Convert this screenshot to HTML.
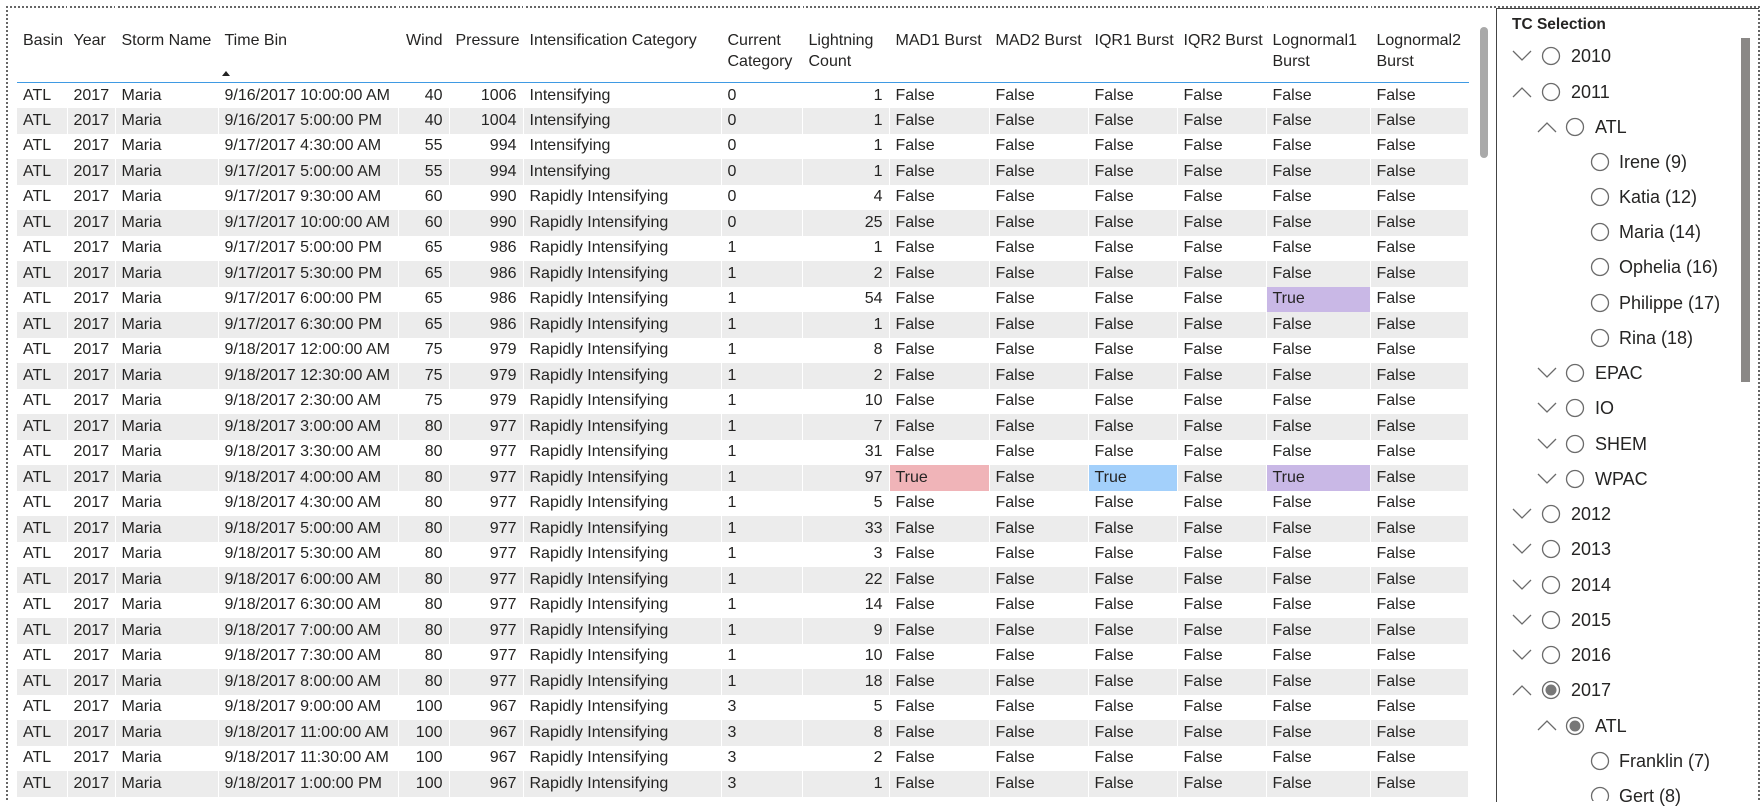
<!DOCTYPE html>
<html><head><meta charset="utf-8"><style>
body{margin:0;width:1762px;height:801px;overflow:hidden;background:#fff;font-family:"Liberation Sans",sans-serif;color:#252423;position:relative}
.dotl{position:absolute;left:6px;top:6px;width:2px;height:795px;background:repeating-linear-gradient(#666 0 2px,transparent 2px 4px)}
.dott{position:absolute;left:6px;top:6px;width:1756px;height:2px;background:repeating-linear-gradient(90deg,#666 0 2px,transparent 2px 4px)}
.dotr{position:absolute;left:1758px;top:6px;width:2px;height:795px;background:repeating-linear-gradient(#666 0 2px,transparent 2px 4px)}
table{position:absolute;left:17px;top:6px;border-collapse:collapse;table-layout:fixed;width:1451px;font-size:16px}
td,th{padding:0 6px;white-space:nowrap;overflow:hidden;border-right:1px solid #fff;text-align:left;font-weight:normal}
th{height:52px;box-sizing:content-box;vertical-align:top;padding-top:24px;padding-bottom:0;line-height:21px;border-bottom:1.5px solid #3f9ae3;position:relative}
tbody tr{height:25.5px}
tbody tr:nth-child(even) td{background:#ececec}
td{line-height:24px}
.r{text-align:right}
tbody tr td.pk{background:#f0b4b8!important}
tbody tr td.bl{background:#a3d0fb!important}
tbody tr td.pu{background:#c9b8e6!important}
.arrow{position:absolute;top:65px;width:0;height:0;border-left:4px solid transparent;border-right:4px solid transparent;border-bottom:5px solid #222}
.sb1{position:absolute;left:1480px;top:27px;width:8px;height:131px;background:#a9a9a9;border-radius:4px}
.slicer{position:absolute;left:1496px;top:8px;width:262px;height:793px;border-left:1.5px solid #444;border-top:1.5px solid #444}
.sb2{position:absolute;left:1741px;top:38px;width:9px;height:344px;background:#8a8886}
.tt{position:absolute;left:1512px;top:16px;font-size:15.5px;font-weight:bold;color:#252423}
.it{position:absolute;font-size:18px;line-height:22px;height:22px;color:#252423}
</style></head><body>
<div class="dott"></div><div class="dotl"></div><div class="dotr"></div>
<table>
<colgroup><col style="width:50px"><col style="width:48px"><col style="width:103px"><col style="width:180px"><col style="width:51px"><col style="width:74px"><col style="width:198px"><col style="width:81px"><col style="width:87px"><col style="width:100px"><col style="width:99px"><col style="width:89px"><col style="width:89px"><col style="width:104px"><col style="width:98px"></colgroup>
<thead><tr><th>Basin</th><th>Year</th><th>Storm Name</th><th>Time Bin<span class="arrow" style="left:3px"></span></th><th class="r">Wind</th><th class="r">Pressure</th><th>Intensification Category</th><th>Current<br>Category</th><th>Lightning<br>Count</th><th>MAD1 Burst</th><th>MAD2 Burst</th><th>IQR1 Burst</th><th>IQR2 Burst</th><th>Lognormal1<br>Burst</th><th>Lognormal2<br>Burst</th></tr></thead>
<tbody>
<tr><td>ATL</td><td>2017</td><td>Maria</td><td>9/16/2017 10:00:00 AM</td><td class="r">40</td><td class="r">1006</td><td>Intensifying</td><td>0</td><td class="r">1</td><td>False</td><td>False</td><td>False</td><td>False</td><td>False</td><td>False</td></tr>
<tr><td>ATL</td><td>2017</td><td>Maria</td><td>9/16/2017 5:00:00 PM</td><td class="r">40</td><td class="r">1004</td><td>Intensifying</td><td>0</td><td class="r">1</td><td>False</td><td>False</td><td>False</td><td>False</td><td>False</td><td>False</td></tr>
<tr><td>ATL</td><td>2017</td><td>Maria</td><td>9/17/2017 4:30:00 AM</td><td class="r">55</td><td class="r">994</td><td>Intensifying</td><td>0</td><td class="r">1</td><td>False</td><td>False</td><td>False</td><td>False</td><td>False</td><td>False</td></tr>
<tr><td>ATL</td><td>2017</td><td>Maria</td><td>9/17/2017 5:00:00 AM</td><td class="r">55</td><td class="r">994</td><td>Intensifying</td><td>0</td><td class="r">1</td><td>False</td><td>False</td><td>False</td><td>False</td><td>False</td><td>False</td></tr>
<tr><td>ATL</td><td>2017</td><td>Maria</td><td>9/17/2017 9:30:00 AM</td><td class="r">60</td><td class="r">990</td><td>Rapidly Intensifying</td><td>0</td><td class="r">4</td><td>False</td><td>False</td><td>False</td><td>False</td><td>False</td><td>False</td></tr>
<tr><td>ATL</td><td>2017</td><td>Maria</td><td>9/17/2017 10:00:00 AM</td><td class="r">60</td><td class="r">990</td><td>Rapidly Intensifying</td><td>0</td><td class="r">25</td><td>False</td><td>False</td><td>False</td><td>False</td><td>False</td><td>False</td></tr>
<tr><td>ATL</td><td>2017</td><td>Maria</td><td>9/17/2017 5:00:00 PM</td><td class="r">65</td><td class="r">986</td><td>Rapidly Intensifying</td><td>1</td><td class="r">1</td><td>False</td><td>False</td><td>False</td><td>False</td><td>False</td><td>False</td></tr>
<tr><td>ATL</td><td>2017</td><td>Maria</td><td>9/17/2017 5:30:00 PM</td><td class="r">65</td><td class="r">986</td><td>Rapidly Intensifying</td><td>1</td><td class="r">2</td><td>False</td><td>False</td><td>False</td><td>False</td><td>False</td><td>False</td></tr>
<tr><td>ATL</td><td>2017</td><td>Maria</td><td>9/17/2017 6:00:00 PM</td><td class="r">65</td><td class="r">986</td><td>Rapidly Intensifying</td><td>1</td><td class="r">54</td><td>False</td><td>False</td><td>False</td><td>False</td><td class="pu">True</td><td>False</td></tr>
<tr><td>ATL</td><td>2017</td><td>Maria</td><td>9/17/2017 6:30:00 PM</td><td class="r">65</td><td class="r">986</td><td>Rapidly Intensifying</td><td>1</td><td class="r">1</td><td>False</td><td>False</td><td>False</td><td>False</td><td>False</td><td>False</td></tr>
<tr><td>ATL</td><td>2017</td><td>Maria</td><td>9/18/2017 12:00:00 AM</td><td class="r">75</td><td class="r">979</td><td>Rapidly Intensifying</td><td>1</td><td class="r">8</td><td>False</td><td>False</td><td>False</td><td>False</td><td>False</td><td>False</td></tr>
<tr><td>ATL</td><td>2017</td><td>Maria</td><td>9/18/2017 12:30:00 AM</td><td class="r">75</td><td class="r">979</td><td>Rapidly Intensifying</td><td>1</td><td class="r">2</td><td>False</td><td>False</td><td>False</td><td>False</td><td>False</td><td>False</td></tr>
<tr><td>ATL</td><td>2017</td><td>Maria</td><td>9/18/2017 2:30:00 AM</td><td class="r">75</td><td class="r">979</td><td>Rapidly Intensifying</td><td>1</td><td class="r">10</td><td>False</td><td>False</td><td>False</td><td>False</td><td>False</td><td>False</td></tr>
<tr><td>ATL</td><td>2017</td><td>Maria</td><td>9/18/2017 3:00:00 AM</td><td class="r">80</td><td class="r">977</td><td>Rapidly Intensifying</td><td>1</td><td class="r">7</td><td>False</td><td>False</td><td>False</td><td>False</td><td>False</td><td>False</td></tr>
<tr><td>ATL</td><td>2017</td><td>Maria</td><td>9/18/2017 3:30:00 AM</td><td class="r">80</td><td class="r">977</td><td>Rapidly Intensifying</td><td>1</td><td class="r">31</td><td>False</td><td>False</td><td>False</td><td>False</td><td>False</td><td>False</td></tr>
<tr><td>ATL</td><td>2017</td><td>Maria</td><td>9/18/2017 4:00:00 AM</td><td class="r">80</td><td class="r">977</td><td>Rapidly Intensifying</td><td>1</td><td class="r">97</td><td class="pk">True</td><td>False</td><td class="bl">True</td><td>False</td><td class="pu">True</td><td>False</td></tr>
<tr><td>ATL</td><td>2017</td><td>Maria</td><td>9/18/2017 4:30:00 AM</td><td class="r">80</td><td class="r">977</td><td>Rapidly Intensifying</td><td>1</td><td class="r">5</td><td>False</td><td>False</td><td>False</td><td>False</td><td>False</td><td>False</td></tr>
<tr><td>ATL</td><td>2017</td><td>Maria</td><td>9/18/2017 5:00:00 AM</td><td class="r">80</td><td class="r">977</td><td>Rapidly Intensifying</td><td>1</td><td class="r">33</td><td>False</td><td>False</td><td>False</td><td>False</td><td>False</td><td>False</td></tr>
<tr><td>ATL</td><td>2017</td><td>Maria</td><td>9/18/2017 5:30:00 AM</td><td class="r">80</td><td class="r">977</td><td>Rapidly Intensifying</td><td>1</td><td class="r">3</td><td>False</td><td>False</td><td>False</td><td>False</td><td>False</td><td>False</td></tr>
<tr><td>ATL</td><td>2017</td><td>Maria</td><td>9/18/2017 6:00:00 AM</td><td class="r">80</td><td class="r">977</td><td>Rapidly Intensifying</td><td>1</td><td class="r">22</td><td>False</td><td>False</td><td>False</td><td>False</td><td>False</td><td>False</td></tr>
<tr><td>ATL</td><td>2017</td><td>Maria</td><td>9/18/2017 6:30:00 AM</td><td class="r">80</td><td class="r">977</td><td>Rapidly Intensifying</td><td>1</td><td class="r">14</td><td>False</td><td>False</td><td>False</td><td>False</td><td>False</td><td>False</td></tr>
<tr><td>ATL</td><td>2017</td><td>Maria</td><td>9/18/2017 7:00:00 AM</td><td class="r">80</td><td class="r">977</td><td>Rapidly Intensifying</td><td>1</td><td class="r">9</td><td>False</td><td>False</td><td>False</td><td>False</td><td>False</td><td>False</td></tr>
<tr><td>ATL</td><td>2017</td><td>Maria</td><td>9/18/2017 7:30:00 AM</td><td class="r">80</td><td class="r">977</td><td>Rapidly Intensifying</td><td>1</td><td class="r">10</td><td>False</td><td>False</td><td>False</td><td>False</td><td>False</td><td>False</td></tr>
<tr><td>ATL</td><td>2017</td><td>Maria</td><td>9/18/2017 8:00:00 AM</td><td class="r">80</td><td class="r">977</td><td>Rapidly Intensifying</td><td>1</td><td class="r">18</td><td>False</td><td>False</td><td>False</td><td>False</td><td>False</td><td>False</td></tr>
<tr><td>ATL</td><td>2017</td><td>Maria</td><td>9/18/2017 9:00:00 AM</td><td class="r">100</td><td class="r">967</td><td>Rapidly Intensifying</td><td>3</td><td class="r">5</td><td>False</td><td>False</td><td>False</td><td>False</td><td>False</td><td>False</td></tr>
<tr><td>ATL</td><td>2017</td><td>Maria</td><td>9/18/2017 11:00:00 AM</td><td class="r">100</td><td class="r">967</td><td>Rapidly Intensifying</td><td>3</td><td class="r">8</td><td>False</td><td>False</td><td>False</td><td>False</td><td>False</td><td>False</td></tr>
<tr><td>ATL</td><td>2017</td><td>Maria</td><td>9/18/2017 11:30:00 AM</td><td class="r">100</td><td class="r">967</td><td>Rapidly Intensifying</td><td>3</td><td class="r">2</td><td>False</td><td>False</td><td>False</td><td>False</td><td>False</td><td>False</td></tr>
<tr><td>ATL</td><td>2017</td><td>Maria</td><td>9/18/2017 1:00:00 PM</td><td class="r">100</td><td class="r">967</td><td>Rapidly Intensifying</td><td>3</td><td class="r">1</td><td>False</td><td>False</td><td>False</td><td>False</td><td>False</td><td>False</td></tr>
</tbody></table>
<div class="sb1"></div>
<div class="slicer"></div>
<div class="sb2"></div>
<div class="tt">TC Selection</div>

<svg width="1762" height="801" style="position:absolute;left:0;top:0" fill="none" stroke="#6b6b6b" stroke-width="1.3">
<path d="M1513 51l9 9 9-9"/><circle cx="1551" cy="56" r="8.5"/>
<path d="M1513 97l9-9 9 9"/><circle cx="1551" cy="92" r="8.5"/>
<path d="M1538 132l9-9 9 9"/><circle cx="1575" cy="127" r="8.5"/>
<circle cx="1600" cy="162" r="8.5"/>
<circle cx="1600" cy="197" r="8.5"/>
<circle cx="1600" cy="232" r="8.5"/>
<circle cx="1600" cy="267" r="8.5"/>
<circle cx="1600" cy="303" r="8.5"/>
<circle cx="1600" cy="338" r="8.5"/>
<path d="M1538 368l9 9 9-9"/><circle cx="1575" cy="373" r="8.5"/>
<path d="M1538 403l9 9 9-9"/><circle cx="1575" cy="408" r="8.5"/>
<path d="M1538 439l9 9 9-9"/><circle cx="1575" cy="444" r="8.5"/>
<path d="M1538 474l9 9 9-9"/><circle cx="1575" cy="479" r="8.5"/>
<path d="M1513 509l9 9 9-9"/><circle cx="1551" cy="514" r="8.5"/>
<path d="M1513 544l9 9 9-9"/><circle cx="1551" cy="549" r="8.5"/>
<path d="M1513 580l9 9 9-9"/><circle cx="1551" cy="585" r="8.5"/>
<path d="M1513 615l9 9 9-9"/><circle cx="1551" cy="620" r="8.5"/>
<path d="M1513 650l9 9 9-9"/><circle cx="1551" cy="655" r="8.5"/>
<path d="M1513 695l9-9 9 9"/><circle cx="1551" cy="690" r="8.5"/>
<path d="M1538 730l9-9 9 9"/><circle cx="1575" cy="726" r="8.5"/>
<circle cx="1600" cy="761" r="8.5"/>
<circle cx="1600" cy="796" r="8.5"/>
<circle cx="1551" cy="690" r="5.5" fill="#777" stroke="none"/>
<circle cx="1575" cy="726" r="5.5" fill="#777" stroke="none"/>
</svg>
<div class="it" style="left:1571px;top:45px">2010</div>
<div class="it" style="left:1571px;top:81px">2011</div>
<div class="it" style="left:1595px;top:116px">ATL</div>
<div class="it" style="left:1619px;top:151px">Irene (9)</div>
<div class="it" style="left:1619px;top:186px">Katia (12)</div>
<div class="it" style="left:1619px;top:221px">Maria (14)</div>
<div class="it" style="left:1619px;top:256px">Ophelia (16)</div>
<div class="it" style="left:1619px;top:292px">Philippe (17)</div>
<div class="it" style="left:1619px;top:327px">Rina (18)</div>
<div class="it" style="left:1595px;top:362px">EPAC</div>
<div class="it" style="left:1595px;top:397px">IO</div>
<div class="it" style="left:1595px;top:433px">SHEM</div>
<div class="it" style="left:1595px;top:468px">WPAC</div>
<div class="it" style="left:1571px;top:503px">2012</div>
<div class="it" style="left:1571px;top:538px">2013</div>
<div class="it" style="left:1571px;top:574px">2014</div>
<div class="it" style="left:1571px;top:609px">2015</div>
<div class="it" style="left:1571px;top:644px">2016</div>
<div class="it" style="left:1571px;top:679px">2017</div>
<div class="it" style="left:1595px;top:715px">ATL</div>
<div class="it" style="left:1619px;top:750px">Franklin (7)</div>
<div class="it" style="left:1619px;top:785px">Gert (8)</div>
</body></html>
